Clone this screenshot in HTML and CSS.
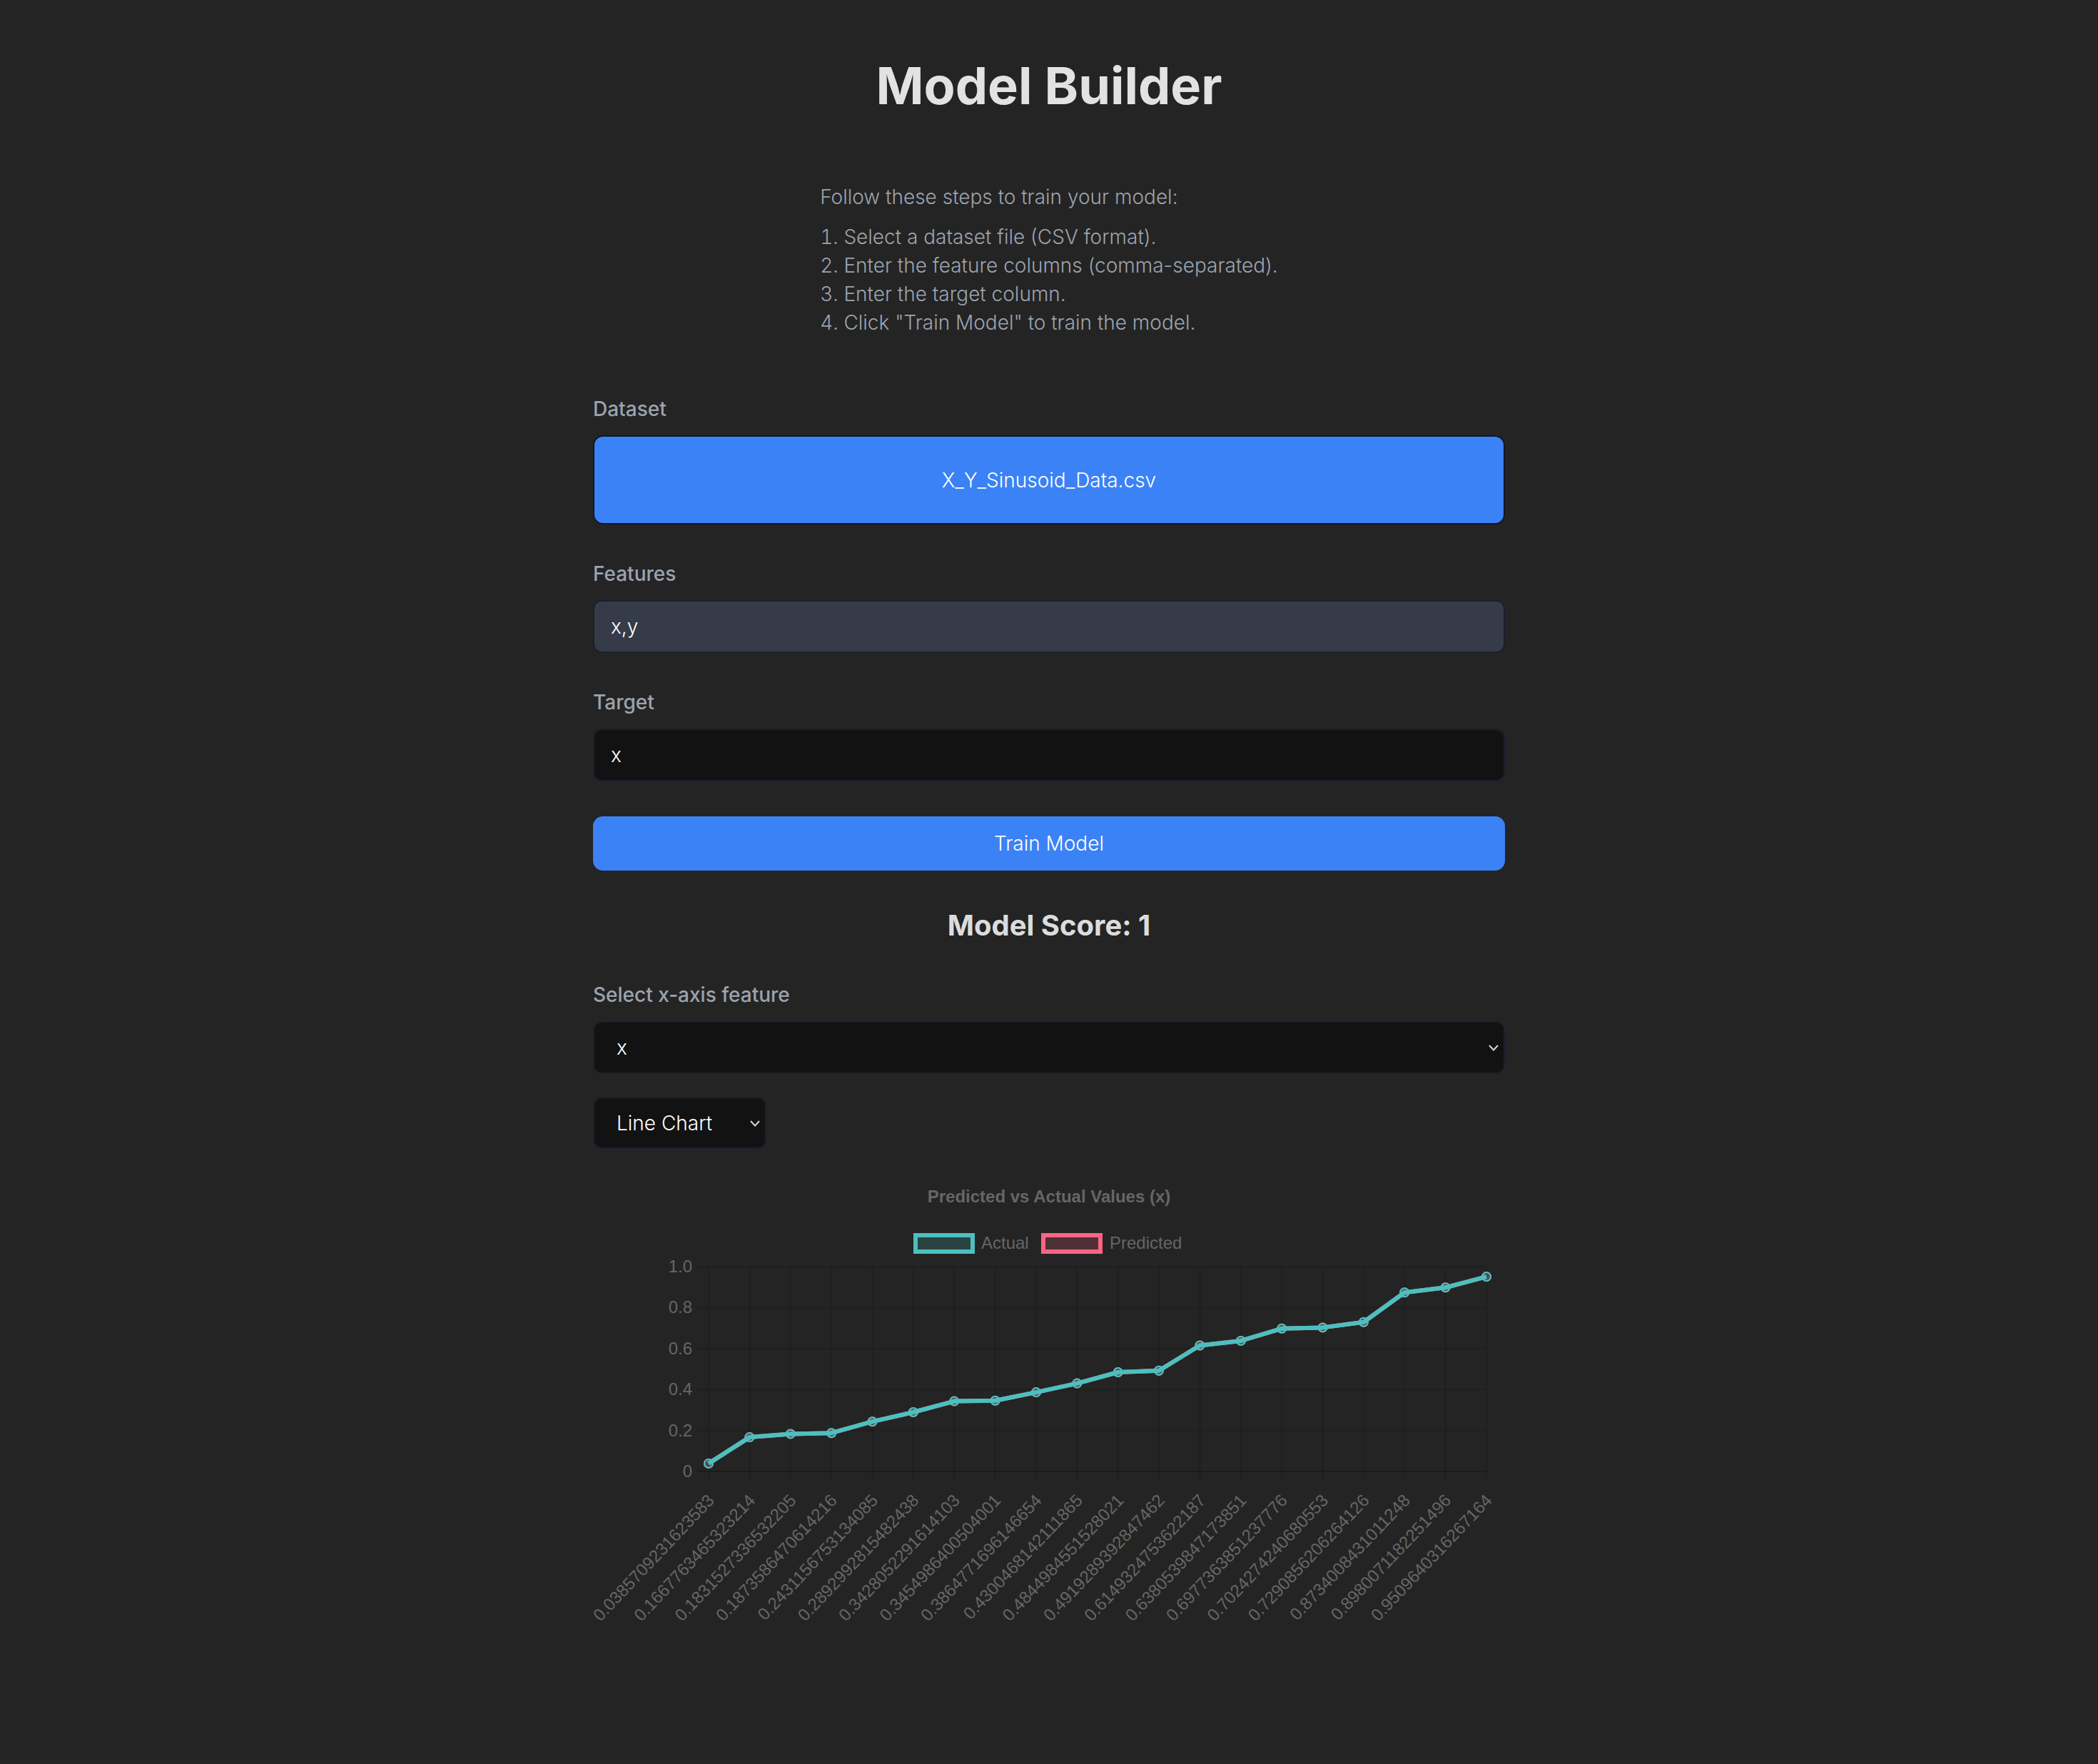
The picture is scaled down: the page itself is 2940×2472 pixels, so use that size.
FILE: index.html
```html
<!DOCTYPE html>
<html lang="en">
<head>
    <meta charset="UTF-8">
    <meta name="viewport" content="width=device-width, initial-scale=1.0">
    <title>Model Builder</title>
    <link rel="stylesheet" href="styles.css">
</head>
<body>
    <main class="page">
        <h1 class="title">Model Builder</h1>

        <div class="steps">
            <p>Follow these steps to train your model:</p>
            <ol>
                <li>Select a dataset file (CSV format).</li>
                <li>Enter the feature columns (comma-separated).</li>
                <li>Enter the target column.</li>
                <li>Click "Train Model" to train the model.</li>
            </ol>
        </div>

        <div class="builder">
            <div class="field">
                <label for="dataset">Dataset</label>
                <div class="file-drop" id="dataset">X_Y_Sinusoid_Data.csv</div>
            </div>
            <div class="field">
                <label for="features">Features</label>
                <input class="input input-filled" type="text" id="features" value="x,y">
            </div>
            <div class="field">
                <label for="target">Target</label>
                <input class="input input-dark" type="text" id="target" value="x">
            </div>
            <button class="train-btn" type="button">Train Model</button>

            <h2 class="score">Model Score: 1</h2>

            <div class="viz">
                <div class="field">
                    <label for="xaxis">Select x-axis feature</label>
                    <div class="select-wrap">
                        <select class="select" id="xaxis">
                            <option>x</option>
                            <option>y</option>
                        </select>
                        <svg class="chevron" width="14" height="9" viewBox="0 0 14 9"><polyline points="1,1 7,7.5 13,1" fill="none" stroke="#d6d6d6" stroke-width="2"/></svg>
                    </div>
                </div>

                <div class="select-wrap chart-type">
                    <select class="select">
                        <option>Line Chart</option>
                        <option>Bar Chart</option>
                    </select>
                    <svg class="chevron" width="14" height="9" viewBox="0 0 14 9"><polyline points="1,1 7,7.5 13,1" fill="none" stroke="#d6d6d6" stroke-width="2"/></svg>
                </div>

                <svg class="chart" width="1278" height="660" viewBox="831 1639 1278 660">
                    <text class="chart-title" x="1470" y="1682" text-anchor="middle">Predicted vs Actual Values (x)</text>

                    <!-- legend -->
                    <rect x="1283" y="1728" width="80" height="23" fill="rgba(75,192,192,0.2)" stroke="#4bc0c0" stroke-width="6"/>
                    <text class="tick" x="1375" y="1747">Actual</text>
                    <rect x="1462" y="1728" width="80" height="23" fill="rgba(255,99,132,0.2)" stroke="#ff6384" stroke-width="6"/>
                    <text class="tick" x="1555" y="1747">Predicted</text>

                    <!-- grid -->
                    <g stroke="rgba(0,0,0,0.12)" stroke-width="2">
                        <line x1="976" y1="1772" x2="2083" y2="1772"/>
                        <line x1="976" y1="1829.4" x2="2083" y2="1829.4"/>
                        <line x1="976" y1="1886.8" x2="2083" y2="1886.8"/>
                        <line x1="976" y1="1944.2" x2="2083" y2="1944.2"/>
                        <line x1="976" y1="2001.6" x2="2083" y2="2001.6"/>
                        <line x1="976" y1="2059" x2="2083" y2="2059" stroke="rgba(0,0,0,0.22)"/>
                        <line x1="993" y1="1772" x2="993" y2="2073"/>
                        <line x1="1050.4" y1="1772" x2="1050.4" y2="2073"/>
                        <line x1="1107.7" y1="1772" x2="1107.7" y2="2073"/>
                        <line x1="1165.1" y1="1772" x2="1165.1" y2="2073"/>
                        <line x1="1222.5" y1="1772" x2="1222.5" y2="2073"/>
                        <line x1="1279.8" y1="1772" x2="1279.8" y2="2073"/>
                        <line x1="1337.2" y1="1772" x2="1337.2" y2="2073"/>
                        <line x1="1394.6" y1="1772" x2="1394.6" y2="2073"/>
                        <line x1="1452" y1="1772" x2="1452" y2="2073"/>
                        <line x1="1509.3" y1="1772" x2="1509.3" y2="2073"/>
                        <line x1="1566.7" y1="1772" x2="1566.7" y2="2073"/>
                        <line x1="1624" y1="1772" x2="1624" y2="2073"/>
                        <line x1="1681.4" y1="1772" x2="1681.4" y2="2073"/>
                        <line x1="1738.8" y1="1772" x2="1738.8" y2="2073"/>
                        <line x1="1796.2" y1="1772" x2="1796.2" y2="2073"/>
                        <line x1="1853.5" y1="1772" x2="1853.5" y2="2073"/>
                        <line x1="1910.9" y1="1772" x2="1910.9" y2="2073"/>
                        <line x1="1968.2" y1="1772" x2="1968.2" y2="2073"/>
                        <line x1="2025.6" y1="1772" x2="2025.6" y2="2073"/>
                        <line x1="2083" y1="1772" x2="2083" y2="2073"/>
                    </g>

                    <!-- y axis -->
                    <g class="tick" text-anchor="end">
                        <text x="970" y="1780">1.0</text>
                        <text x="970" y="1837.4">0.8</text>
                        <text x="970" y="1894.8">0.6</text>
                        <text x="970" y="1952.2">0.4</text>
                        <text x="970" y="2009.6">0.2</text>
                        <text x="970" y="2067">0</text>
                    </g>

                    <!-- predicted (drawn under actual) -->
                    <polyline fill="none" stroke="#ff6384" stroke-width="6" stroke-linejoin="round" points="993,2047.9 1050.4,2011.1 1107.7,2006.4 1165.1,2005.2 1222.5,1989.2 1279.8,1976 1337.2,1960.6 1394.6,1959.8 1452,1948.1 1509.3,1935.6 1566.7,1920 1624,1917.8 1681.4,1882.5 1738.8,1875.9 1796.2,1858.8 1853.5,1857.4 1910.9,1849.8 1968.2,1808.3 2025.6,1801.3 2083,1786.1"/>
                    <g fill="rgba(255,99,132,0.2)" stroke="#ff6384" stroke-width="2">
                        <circle cx="993" cy="2047.9" r="6"/><circle cx="1050.4" cy="2011.1" r="6"/><circle cx="1107.7" cy="2006.4" r="6"/><circle cx="1165.1" cy="2005.2" r="6"/><circle cx="1222.5" cy="1989.2" r="6"/><circle cx="1279.8" cy="1976" r="6"/><circle cx="1337.2" cy="1960.6" r="6"/><circle cx="1394.6" cy="1959.8" r="6"/><circle cx="1452" cy="1948.1" r="6"/><circle cx="1509.3" cy="1935.6" r="6"/><circle cx="1566.7" cy="1920" r="6"/><circle cx="1624" cy="1917.8" r="6"/><circle cx="1681.4" cy="1882.5" r="6"/><circle cx="1738.8" cy="1875.9" r="6"/><circle cx="1796.2" cy="1858.8" r="6"/><circle cx="1853.5" cy="1857.4" r="6"/><circle cx="1910.9" cy="1849.8" r="6"/><circle cx="1968.2" cy="1808.3" r="6"/><circle cx="2025.6" cy="1801.3" r="6"/><circle cx="2083" cy="1786.1" r="6"/>
                    </g>

                    <!-- actual -->
                    <polyline fill="none" stroke="#4bc0c0" stroke-width="6" stroke-linejoin="round" points="993,2047.9 1050.4,2011.1 1107.7,2006.4 1165.1,2005.2 1222.5,1989.2 1279.8,1976 1337.2,1960.6 1394.6,1959.8 1452,1948.1 1509.3,1935.6 1566.7,1920 1624,1917.8 1681.4,1882.5 1738.8,1875.9 1796.2,1858.8 1853.5,1857.4 1910.9,1849.8 1968.2,1808.3 2025.6,1801.3 2083,1786.1"/>
                    <g fill="rgba(75,192,192,0.2)" stroke="#4bc0c0" stroke-width="2">
                        <circle cx="993" cy="2047.9" r="6"/><circle cx="1050.4" cy="2011.1" r="6"/><circle cx="1107.7" cy="2006.4" r="6"/><circle cx="1165.1" cy="2005.2" r="6"/><circle cx="1222.5" cy="1989.2" r="6"/><circle cx="1279.8" cy="1976" r="6"/><circle cx="1337.2" cy="1960.6" r="6"/><circle cx="1394.6" cy="1959.8" r="6"/><circle cx="1452" cy="1948.1" r="6"/><circle cx="1509.3" cy="1935.6" r="6"/><circle cx="1566.7" cy="1920" r="6"/><circle cx="1624" cy="1917.8" r="6"/><circle cx="1681.4" cy="1882.5" r="6"/><circle cx="1738.8" cy="1875.9" r="6"/><circle cx="1796.2" cy="1858.8" r="6"/><circle cx="1853.5" cy="1857.4" r="6"/><circle cx="1910.9" cy="1849.8" r="6"/><circle cx="1968.2" cy="1808.3" r="6"/><circle cx="2025.6" cy="1801.3" r="6"/><circle cx="2083" cy="1786.1" r="6"/>
                    </g>

                    <!-- x axis labels -->
                    <g class="tick" text-anchor="end" dominant-baseline="central">
                        <text transform="translate(996,2095) rotate(-46.5)">0.0385709231623583</text>
                        <text transform="translate(1053.4,2095) rotate(-46.5)">0.1667763465323214</text>
                        <text transform="translate(1110.7,2095) rotate(-46.5)">0.1831527336532205</text>
                        <text transform="translate(1168.1,2095) rotate(-46.5)">0.1873586470614216</text>
                        <text transform="translate(1225.5,2095) rotate(-46.5)">0.2431156753134085</text>
                        <text transform="translate(1282.8,2095) rotate(-46.5)">0.2892992815482438</text>
                        <text transform="translate(1340.2,2095) rotate(-46.5)">0.3428052291614103</text>
                        <text transform="translate(1397.6,2095) rotate(-46.5)">0.3454986400504001</text>
                        <text transform="translate(1455,2095) rotate(-46.5)">0.3864771696146654</text>
                        <text transform="translate(1512.3,2095) rotate(-46.5)">0.4300468142111865</text>
                        <text transform="translate(1569.7,2095) rotate(-46.5)">0.4844984551528021</text>
                        <text transform="translate(1627,2095) rotate(-46.5)">0.4919289392847462</text>
                        <text transform="translate(1684.4,2095) rotate(-46.5)">0.6149324753622187</text>
                        <text transform="translate(1741.8,2095) rotate(-46.5)">0.6380539847173851</text>
                        <text transform="translate(1799.2,2095) rotate(-46.5)">0.6977363851237776</text>
                        <text transform="translate(1856.5,2095) rotate(-46.5)">0.7024274240680553</text>
                        <text transform="translate(1913.9,2095) rotate(-46.5)">0.7290856206264126</text>
                        <text transform="translate(1971.2,2095) rotate(-46.5)">0.8734008431011248</text>
                        <text transform="translate(2028.6,2095) rotate(-46.5)">0.8980071182251496</text>
                        <text transform="translate(2086,2095) rotate(-46.5)">0.9509640316267164</text>
                    </g>
                </svg>
            </div>
        </div>
    </main>
</body>
</html>
```

FILE: styles.css
```css
body {
    margin: 0;
    background-color: #242424;
    color: rgba(255, 255, 255, 0.87);
    font-family: Inter, "Noto Sans", sans-serif;
}
.page {
    display: flex;
    flex-direction: column;
    align-items: center;
    padding: 80px 0 160px;
}
.title {
    margin: 0;
    font-size: 72px;
    line-height: 80px;
    font-weight: 700;
}
.steps {
    margin-top: 96px;
    color: #9ca3af;
    font-size: 28px;
    line-height: 40px;
    font-weight: 300;
}
.steps p {
    margin: 0 0 16px;
}
.steps ol {
    margin: 0;
    padding: 0;
    list-style: decimal inside;
}
.builder {
    width: 1278px;
    margin-top: 81px;
    display: flex;
    flex-direction: column;
    gap: 49px;
}
.field label {
    display: block;
    margin-bottom: 17px;
    font-size: 28px;
    line-height: 40px;
    font-weight: 500;
    color: #9ca3af;
}
.file-drop {
    height: 125px;
    box-sizing: border-box;
    display: flex;
    align-items: center;
    justify-content: center;
    background-color: #3b82f6;
    border: 2px solid #111827;
    border-radius: 14px;
    color: #fff;
    font-size: 28px;
    font-weight: 300;
}
.input {
    display: block;
    width: 100%;
    height: 74px;
    box-sizing: border-box;
    padding: 0 23px;
    border: 2px solid #1a202d;
    border-radius: 12px;
    color: #fff;
    font-family: inherit;
    font-size: 28px;
    font-weight: 300;
    outline: none;
}
.input-filled {
    background-color: #353b48;
}
.input-dark {
    background-color: #121212;
}
.train-btn {
    height: 76px;
    border: none;
    border-radius: 14px;
    background-color: #3b82f6;
    color: #fff;
    font-family: inherit;
    font-size: 28px;
    font-weight: 300;
    cursor: pointer;
}
.score {
    margin: 0;
    text-align: center;
    font-size: 40px;
    line-height: 56px;
    font-weight: 700;
}
.viz {
    display: flex;
    flex-direction: column;
    gap: 32px;
}
.select-wrap {
    position: relative;
}
.select {
    appearance: none;
    display: block;
    width: 100%;
    height: 74px;
    box-sizing: border-box;
    padding: 0 40px 0 31px;
    background-color: #121212;
    border: 2px solid #1a202d;
    border-radius: 12px;
    color: #fff;
    font-family: inherit;
    font-size: 28px;
    font-weight: 300;
    outline: none;
}
.chevron {
    position: absolute;
    right: 9px;
    top: 50%;
    margin-top: -4px;
}
.chart-type {
    align-self: flex-start;
    width: 243px;
}
.chart-type .select {
    height: 73px;
}
.chart {
    display: block;
    overflow: visible;
}
.chart-title {
    font-family: "Liberation Sans", Arial, sans-serif;
    font-size: 24px;
    font-weight: 700;
    fill: #666;
}
.tick {
    font-family: "Liberation Sans", Arial, sans-serif;
    font-size: 24px;
    fill: #666;
}
```
